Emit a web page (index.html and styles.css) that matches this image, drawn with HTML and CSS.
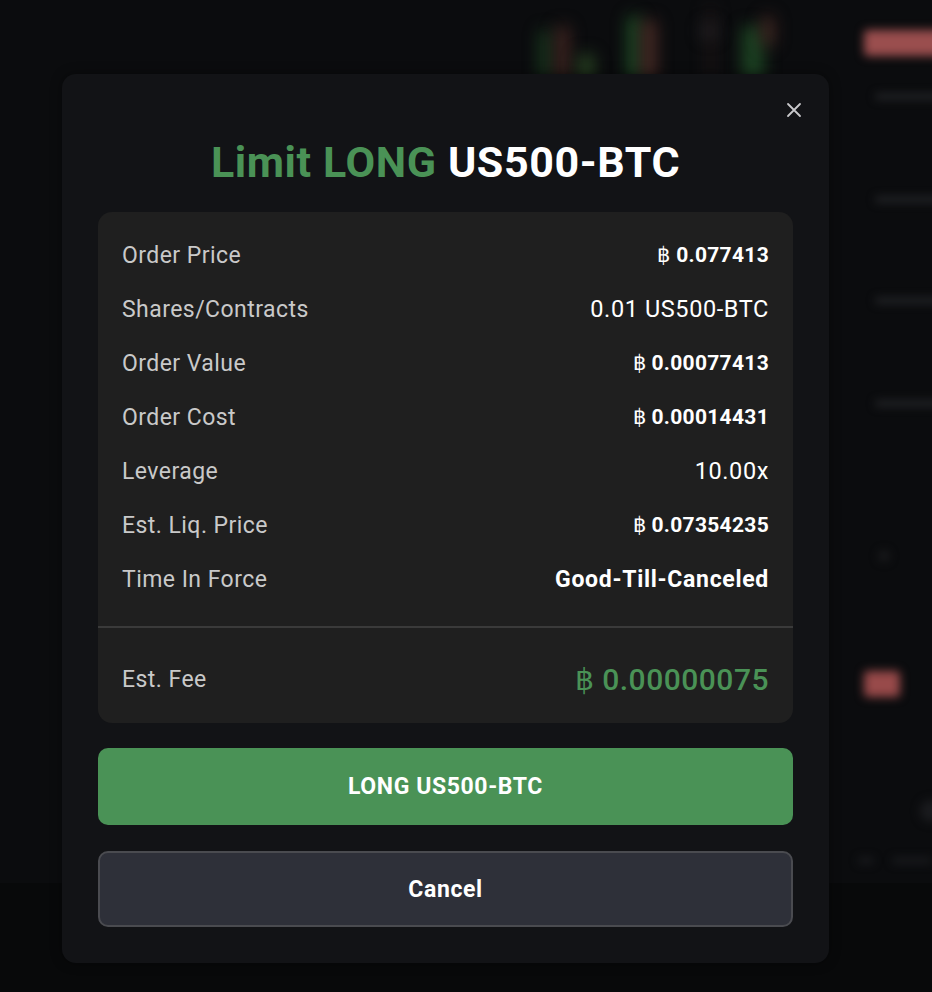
FILE: index.html
```html
<!DOCTYPE html>
<html lang="en">
<head>
<meta charset="utf-8">
<title>Limit LONG US500-BTC</title>
<link rel="stylesheet" href="styles.css">
</head>
<body>
<div class="backdrop">
  <div class="chart">
    <span class="candle c1"></span>
    <span class="candle c2"></span>
    <span class="candle c3"></span>
    <span class="candle c4"></span>
    <span class="candle c5"></span>
    <span class="candle c6"></span>
    <span class="candle c7"></span>
    <span class="candle c8"></span>
    <span class="candle c9"></span>
  </div>
  <div class="side">
    <span class="pill p1"></span>
    <span class="line l1"></span>
    <span class="line l2"></span>
    <span class="line l3"></span>
    <span class="line l4"></span>
    <span class="dot"></span>
    <span class="pill p2"></span>
    <span class="blob"></span>
    <span class="line l5"></span>
    <span class="line l6"></span>
  </div>
  <div class="footer-band"></div>
</div>

<div class="modal" role="dialog">
  <button class="close" aria-label="Close">
    <svg width="16" height="16" viewBox="0 0 16 16"><path d="M2 2 L14 14 M14 2 L2 14" stroke="#c9c9cc" stroke-width="1.8" stroke-linecap="round"/></svg>
  </button>
  <h1 class="title"><span class="green">Limit LONG</span> US500-BTC</h1>

  <div class="card">
    <div class="rows">
      <div class="row"><span class="label">Order Price</span><span class="value btc"><span class="sym">฿</span> 0.077413</span></div>
      <div class="row"><span class="label">Shares/Contracts</span><span class="value plain">0.01 US500-BTC</span></div>
      <div class="row"><span class="label">Order Value</span><span class="value btc"><span class="sym">฿</span> 0.00077413</span></div>
      <div class="row"><span class="label">Order Cost</span><span class="value btc"><span class="sym">฿</span> 0.00014431</span></div>
      <div class="row"><span class="label">Leverage</span><span class="value plain">10.00x</span></div>
      <div class="row"><span class="label">Est. Liq. Price</span><span class="value btc"><span class="sym">฿</span> 0.07354235</span></div>
      <div class="row"><span class="label">Time In Force</span><span class="value strong">Good-Till-Canceled</span></div>
    </div>
    <div class="fee">
      <span class="label">Est. Fee</span>
      <span class="fee-value"><span class="sym">฿</span> 0.00000075</span>
    </div>
  </div>

  <button class="btn btn-long">LONG US500-BTC</button>
  <button class="btn btn-cancel">Cancel</button>
</div>
</body>
</html>
```

FILE: styles.css
```css
* { box-sizing: border-box; }

html, body {
  margin: 0;
  padding: 0;
  width: 932px;
  height: 992px;
  overflow: hidden;
  background: #0b0c0e;
  font-family: Roboto, "Liberation Sans", sans-serif;
}

.backdrop {
  position: absolute;
  inset: 0;
  overflow: hidden;
}

.chart, .side, .footer-band { position: absolute; }

.chart { left: 520px; top: 0; width: 300px; height: 80px; }
.candle {
  position: absolute;
  bottom: 0;
  width: 12px;
  filter: blur(8px);
  border-radius: 4px;
}
.c1 { left: 20px; width: 10px; height: 50px; background: #1c4222; }
.c2 { left: 36px; width: 13px; height: 54px; background: #432622; }
.c3 { left: 58px; width: 16px; height: 26px; background: #284222; }
.c4 { left: 108px; width: 12px; height: 64px; background: #1f5228; }
.c5 { left: 122px; width: 14px; height: 60px; background: #4c2b26; }
.c6 { left: 182px; width: 14px; height: 14px; background: #26262a; top: 24px; bottom: auto; }
.c7 { left: 188px; width: 5px; height: 74px; background: #261a1a; }
.c8 { left: 222px; width: 22px; height: 54px; background: #1c4222; }
.c9 { left: 242px; width: 12px; height: 30px; background: #432622; top: 16px; bottom: auto; }

.side { left: 840px; top: 0; width: 92px; height: 992px; }
.pill, .line, .dot, .blob { position: absolute; display: block; }
.p1 { left: 24px; top: 30px; width: 80px; height: 26px; background: #9a4e4e; filter: blur(5px); border-radius: 4px; }
.p2 { left: 24px; top: 671px; width: 36px; height: 26px; background: #984a4a; filter: blur(5px); border-radius: 4px; }
.line { height: 7px; background: #202124; filter: blur(4px); border-radius: 3px; }
.l1 { left: 35px; top: 93px; width: 70px; }
.l2 { left: 35px; top: 196px; width: 70px; }
.l3 { left: 35px; top: 297px; width: 70px; }
.l4 { left: 35px; top: 400px; width: 70px; }
.l5 { left: 18px; top: 857px; width: 16px; background: #18191c; }
.l6 { left: 52px; top: 857px; width: 40px; background: #18191c; }
.dot { left: 38px; top: 550px; width: 12px; height: 12px; background: #18191b; filter: blur(4px); border-radius: 50%; }
.blob { left: 80px; top: 800px; width: 22px; height: 22px; background: #1a1b1e; filter: blur(5px); border-radius: 50%; }

.footer-band { left: 0; top: 883px; width: 932px; height: 109px; background: #08090a; }

.modal {
  position: absolute;
  left: 62px;
  top: 74px;
  width: 767px;
  height: 889px;
  background: #121316;
  border-radius: 14px;
  padding: 63px 36px 36px;
  display: flex;
  flex-direction: column;
  box-shadow: 0 0 12px rgba(0,0,0,0.4);
}

.close {
  position: absolute;
  top: 28px;
  right: 27px;
  width: 16px;
  height: 16px;
  padding: 0;
  border: 0;
  background: transparent;
  display: flex;
}

.title {
  margin: 0 0 25px;
  text-align: center;
  font-size: 43px;
  line-height: 50px;
  font-weight: 700;
  color: #ffffff;
  letter-spacing: 0.6px;
}
.green { color: #4a9256; }

.card {
  background: #1f1f1f;
  border-radius: 14px;
  display: flex;
  flex-direction: column;
}

.rows {
  padding: 16px 24px 20px;
  border-bottom: 2px solid #3a3a3a;
}

.row {
  height: 54px;
  display: flex;
  align-items: center;
  justify-content: space-between;
}

.label {
  font-size: 23px;
  letter-spacing: 0.45px;
  color: #c9c9c9;
}

.value { color: #ffffff; }
.value.btc { font-size: 21px; font-weight: 700; letter-spacing: 0.3px; }
.value.plain { font-size: 23.5px; font-weight: 400; letter-spacing: 0.6px; }
.value.strong { font-size: 23px; font-weight: 700; letter-spacing: 0.7px; }
.sym { font-weight: 400; }

.fee {
  height: 95px;
  padding: 8px 24px 0;
  display: flex;
  align-items: center;
  justify-content: space-between;
}

.fee-value {
  font-size: 30px;
  font-weight: 500;
  letter-spacing: 0.5px;
  color: #4a9256;
}

.btn {
  display: block;
  width: 100%;
  font-family: Roboto, "Liberation Sans", sans-serif;
  font-weight: 700;
  font-size: 23px;
  letter-spacing: 0.6px;
  color: #ffffff;
  border-radius: 10px;
  cursor: pointer;
}

.btn-long {
  margin-top: 25px;
  height: 77px;
  background: #4a9256;
  border: 0;
}

.btn-cancel {
  margin-top: 26px;
  height: 76px;
  background: #2e3039;
  border: 2px solid #4a4b50;
}
```
